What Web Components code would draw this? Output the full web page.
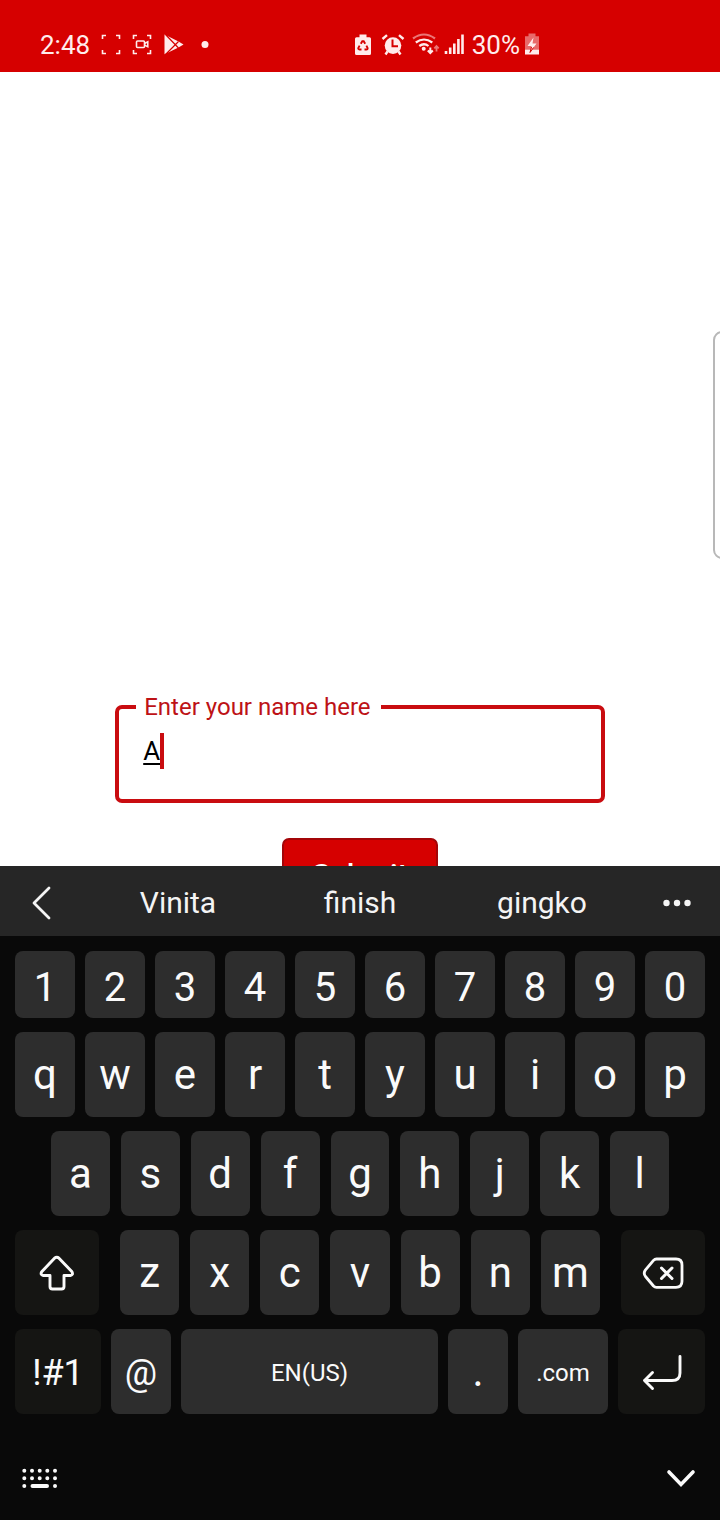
<!DOCTYPE html>
<html lang="en">
<head>
<meta charset="utf-8">
<meta name="viewport" content="width=device-width, initial-scale=1">
<title>Enter your name</title>
<style>
  html, body { margin: 0; height: 100%; background: #fff; }
  body { font-family: Roboto, "Noto Sans", sans-serif; }
</style>
</head>
<body>
<name-screen></name-screen>
<script>
const ICONS = {
  frame: [20, 24, `<path d="M1.500 6V2.500H5M15 2.500H18.500V6M18.500 17V20.500H15M5 20.500H1.500V17" fill="none" stroke="currentColor" stroke-width="1.600"/>`],
  record: [20, 24, `<path d="M1.500 6V2.500H5M15 2.500H18.500V6M18.500 17V20.500H15M5 20.500H1.500V17" fill="none" stroke="currentColor" stroke-width="1.600"/><rect x="4.500" y="8" width="8" height="6.500" rx="1" fill="none" stroke="currentColor" stroke-width="1.600"/><path d="M12.500 10.500L15.800 8.800V13.800L12.500 12" fill="none" stroke="currentColor" stroke-width="1.500"/>`],
  play: [22, 24, `<path d="M1.500 1.500L15.500 8.500L20.500 11.500L15.500 14.500L1.500 21.300Z" fill="currentColor"/><path d="M2.500 1.500L15.500 15M2.500 21.500L15.500 8.500" stroke="#d60000" stroke-width="1.200"/>`],
  dot: [18, 24, `<circle cx="9" cy="11.500" r="3.500" fill="currentColor"/>`],
  recycle: [22, 24, `<path d="M7.500 1.500h7v2.800H17.500q1.500 0 1.500 1.500V20.500q0 1.500-1.500 1.500H4.500Q3 22 3 20.500V5.800q0-1.500 1.500-1.500h3z" fill="currentColor"/><path d="M8.800 10.800L10.300 8.200h1.400l1.500 2.600M14.400 12.600L15.600 15q.3 1.400-1.300 1.500H12.500M9.500 16.500H7.500Q6 16.300 6.300 15l1.300-2.400" fill="none" stroke="#d60000" stroke-width="1.900"/>`],
  alarm: [30, 24, `<circle cx="15" cy="12.600" r="8.300" fill="currentColor"/><path d="M4.500 6L9 2.200M21 2.200L25.500 6M9.500 18.500L7.500 21.500M20.500 18.500L22.500 21.500" stroke="currentColor" stroke-width="2.400" fill="none"/><path d="M14.500 6.500V13.200H20" fill="none" stroke="#d60000" stroke-width="2"/>`],
  wifi: [28, 24, `<g fill="none" stroke="currentColor" stroke-width="2.200"><path d="M1 5.500Q12-2.500 23 5.500" opacity=".5"/><path d="M3.800 9.500Q12 3.500 20.300 9.500"/><path d="M7.300 13Q12 9.500 16.500 13"/><path d="M18.300 14.500V20M15.800 17.500L18.300 20L20.800 17.500" stroke-width="2"/><path d="M24.500 18.500V13M22.300 15.300L24.500 13L26.700 15.300" opacity=".5" stroke-width="1.800"/></g><circle cx="11.700" cy="15.800" r="2" fill="currentColor"/>`],
  signal: [22, 24, `<path d="M2 21V18M6.200 21V14.500M10.300 21V10.500M14.400 21V6M18.500 21V1.500" stroke="currentColor" stroke-width="2.600"/>`],
  charging: [16, 24, `<path d="M4.500.5h7v2.800H15V16.500H1V3.300h3.500z" fill="currentColor" opacity=".45"/><path d="M1 16.500h14v5H1z" fill="currentColor"/><path d="M9.500 4.500L3.500 13H7.500L6 19.500L12.500 10.500H8.500Z" fill="currentColor"/><path d="M7.500 14L6 19.500L9.500 14.500" stroke="#d60000" stroke-width="1" fill="none"/>`],
  back: [28, 36, `<path d="M19 3L4 18L19 33" fill="none" stroke="currentColor" stroke-width="2.800" stroke-linecap="round" stroke-linejoin="round"/>`],
  more: [30, 10, `<circle cx="4.500" cy="5" r="3.200" fill="currentColor"/><circle cx="15" cy="5" r="3.200" fill="currentColor"/><circle cx="25.500" cy="5" r="3.200" fill="currentColor"/>`],
  shift: [36, 36, `<path d="M15.500 3.200Q17.800 1.300 20 3.200L33 16.800Q34.500 20 31.500 20.500H25V31.500Q25 34 22.500 34H13.500Q11 34 11 31.500V20.500H4.200Q1 20 2.700 16.800Z" fill="none" stroke="currentColor" stroke-width="2.900" stroke-linejoin="round"/>`],
  erase: [42, 32, `<path d="M14.500 2H34Q40 2 40 8V24.300Q40 30.300 34 30.300H14.500Q12.800 30.300 11.500 29L3.500 19.500Q1 16.200 3.500 12.900L11.500 3.400Q12.800 2 14.500 2Z" fill="none" stroke="currentColor" stroke-width="2.800" stroke-linejoin="round"/><path d="M19.500 11L30 21.500M30 11L19.500 21.500" stroke="currentColor" stroke-width="3" stroke-linecap="round"/>`],
  enter: [42, 36, `<path d="M39 2.500V19Q39 26.500 31 26.500H3.500M11.500 18.500L3.500 26.500L11.500 34.500" fill="none" stroke="currentColor" stroke-width="2.900" stroke-linejoin="round" stroke-linecap="round"/>`],
  keyboard: [36, 20, `<path d="M2.300 2.700h.01M10 2.700h.01M17.700 2.700h.01M25.300 2.700h.01M33 2.700h.01M2.300 10.200h.01M10 10.200h.01M17.700 10.200h.01M25.300 10.200h.01M33 10.200h.01M2.300 18h.01M10.500 18H25M33 18h.01" stroke="currentColor" stroke-width="4" stroke-linecap="round"/>`],
  hide: [30, 20, `<path d="M3 4L15 16.500L27 4" fill="none" stroke="currentColor" stroke-width="3.600" stroke-linecap="round"/>`]
};

class UiIcon extends HTMLElement {
  connectedCallback() {
    const [w, h, body] = ICONS[this.getAttribute('name')];
    this.attachShadow({ mode: 'open' }).innerHTML =
      `<style>:host{display:inline-flex;flex:none}svg{display:block;overflow:visible}</style>
       <svg width="${w}" height="${h}" viewBox="0 0 ${w} ${h}" aria-hidden="true">${body}</svg>`;
  }
}
customElements.define('ui-icon', UiIcon);

function define(name, html) {
  const template = document.createElement('template');
  template.innerHTML = html;
  customElements.define(name, class extends HTMLElement {
    constructor() {
      super();
      this.attachShadow({ mode: 'open' }).append(template.content.cloneNode(true));
    }
  });
}

define('status-bar', `
  <style>
    :host { display: flex; justify-content: space-between; align-items: center; box-sizing: border-box;
      height: 72px; padding: 18px 25% 0 40px; background: #d60000; color: #ffecec; font-size: 26px; line-height: 30px; }
    div { display: flex; align-items: center; }
    .left { gap: 11px; }
    .right { gap: 4px; }
    .signals { gap: 4px; padding-right: 2px; }
  </style>
  <div class="left"><span>2:48</span><ui-icon name="frame"></ui-icon><ui-icon name="record"></ui-icon><ui-icon name="play"></ui-icon><ui-icon name="dot"></ui-icon></div>
  <div class="right">
    <div class="signals"><ui-icon name="recycle"></ui-icon><ui-icon name="alarm"></ui-icon><ui-icon name="wifi"></ui-icon><ui-icon name="signal"></ui-icon></div>
    <span>30%</span><ui-icon name="charging"></ui-icon>
  </div>
`);

define('outlined-field', `
  <style>
    :host { display: block; }
    fieldset { margin: 0; min-width: 0; padding: 0 17px; border: 4px solid #c90c10; border-radius: 7px; }
    legend { padding: 0 10px 0 8px; color: #bd1216; font-size: 24px; line-height: 28px; }
    .value { display: flex; align-items: center; padding: 12px 7px 30px; }
    input { field-sizing: content; min-width: 0; height: 36px; margin: 0; padding: 0; border: 0; outline: 0; background: none;
      font: 26px/36px Roboto, sans-serif; color: #000;
      text-decoration: underline; text-decoration-thickness: 2px; text-underline-offset: 3px; }
    .caret { flex: none; width: 4px; height: 36px; background: #c90c10; }
  </style>
  <fieldset>
    <legend><label for="name">Enter your name here</label></legend>
    <div class="value"><input id="name" type="text" value="A" autocomplete="off"><span class="caret"></span></div>
  </fieldset>
`);

define('submit-button', `
  <style>
    :host { display: block; }
    button { display: block; min-width: 156px; height: 74px; padding: 0 24px; border: 2px solid #a30508; border-radius: 7px;
      background: #d60000; color: #fff; font: 500 30px/36px Roboto, sans-serif; }
  </style>
  <button type="submit"><slot></slot></button>
`);

define('name-form', `
  <style>
    :host { position: relative; flex: 1; display: flex; flex-direction: column; justify-content: flex-end; align-items: center;
      overflow: hidden; background: #fff; }
    outlined-field { width: 68%; }
    .actions { height: 28px; margin-top: 35px; overflow: hidden; }
    .edge { position: absolute; right: -13px; top: 259px; width: 16px; height: 224px; border: 2px solid #b8b8b8; border-radius: 9px; }
  </style>
  <div class="edge"></div>
  <outlined-field></outlined-field>
  <div class="actions"><submit-button>Submit</submit-button></div>
`);

define('suggestion-bar', `
  <style>
    :host { display: grid; grid-template-columns: 87px repeat(3, 1fr) 87px; height: 70px; background: #262626; }
    button { display: flex; align-items: center; justify-content: center; margin: 0; padding: 3px 0 0; border: 0; background: none;
      color: #f4f4f4; font: 30px/36px Roboto, sans-serif; }
  </style>
  <button type="button" aria-label="Back"><ui-icon name="back"></ui-icon></button>
  <button type="button">Vinita</button>
  <button type="button">finish</button>
  <button type="button">gingko</button>
  <button type="button" aria-label="More"><ui-icon name="more"></ui-icon></button>
`);

define('key-cap', `
  <style>
    :host { display: block; min-width: 0; }
    button { display: flex; align-items: center; justify-content: center; width: 100%; height: 85px; margin: 0; padding: 0;
      border: 0; border-radius: 8px; background: #2d2d2d; color: #fafafa; font: 42px/48px Roboto, sans-serif; }
    :host([kind="digit"]) button { height: 67px; padding-top: 6px; font-size: 40px; }
    :host([kind="small"]) button { padding-top: 2px; font-size: 24px; }
    :host([kind="symbol"]) button { padding-top: 2px; font-size: 36px; }
    :host([dark]) button { background: #151513; }
  </style>
  <button type="button"><slot></slot></button>
`);

const caps = (keys, kind = '') => [...keys].map(k => `<key-cap kind="${kind}">${k}</key-cap>`).join('');

define('soft-keyboard', `
  <style>
    :host { display: block; background: #090909; color: #fafafa; }
    .rows { display: grid; gap: 14px; padding: 15px 15px 0; }
    .row { display: grid; gap: 10px; }
    .ten { grid-template-columns: repeat(10, 1fr); }
    .nine { grid-template-columns: repeat(9, 1fr); gap: 11px; padding: 0 36px; }
    .third { grid-template-columns: 84fr 480fr 84fr; gap: 21px; }
    .seven { display: grid; grid-template-columns: repeat(7, 1fr); gap: 11px; }
    .last { grid-template-columns: 86fr 60fr 257fr 60fr 90fr 87fr; }
    .foot { display: flex; justify-content: space-between; align-items: center; box-sizing: border-box; height: 106px; padding: 22px 24px 0 22px; }
    .foot button { display: flex; margin: 0; padding: 0; border: 0; background: none; color: inherit; }
  </style>
  <suggestion-bar></suggestion-bar>
  <div class="rows">
    <div class="row ten">${caps('1234567890', 'digit')}</div>
    <div class="row ten">${caps('qwertyuiop')}</div>
    <div class="row nine">${caps('asdfghjkl')}</div>
    <div class="row third">
      <key-cap dark><ui-icon name="shift"></ui-icon></key-cap>
      <div class="seven">${caps('zxcvbnm')}</div>
      <key-cap dark><ui-icon name="erase"></ui-icon></key-cap>
    </div>
    <div class="row last">
      <key-cap dark kind="symbol">!#1</key-cap>
      <key-cap kind="symbol">@</key-cap>
      <key-cap kind="small">EN(US)</key-cap>
      <key-cap>.</key-cap>
      <key-cap kind="small">.com</key-cap>
      <key-cap dark><ui-icon name="enter"></ui-icon></key-cap>
    </div>
  </div>
  <div class="foot">
    <button type="button" aria-label="Change keyboard"><ui-icon name="keyboard"></ui-icon></button>
    <button type="button" aria-label="Hide keyboard"><ui-icon name="hide"></ui-icon></button>
  </div>
`);

define('name-screen', `
  <style>
    :host { display: flex; flex-direction: column; min-height: 100vh; }
  </style>
  <status-bar></status-bar>
  <name-form></name-form>
  <soft-keyboard></soft-keyboard>
`);
</script>
</body>
</html>
